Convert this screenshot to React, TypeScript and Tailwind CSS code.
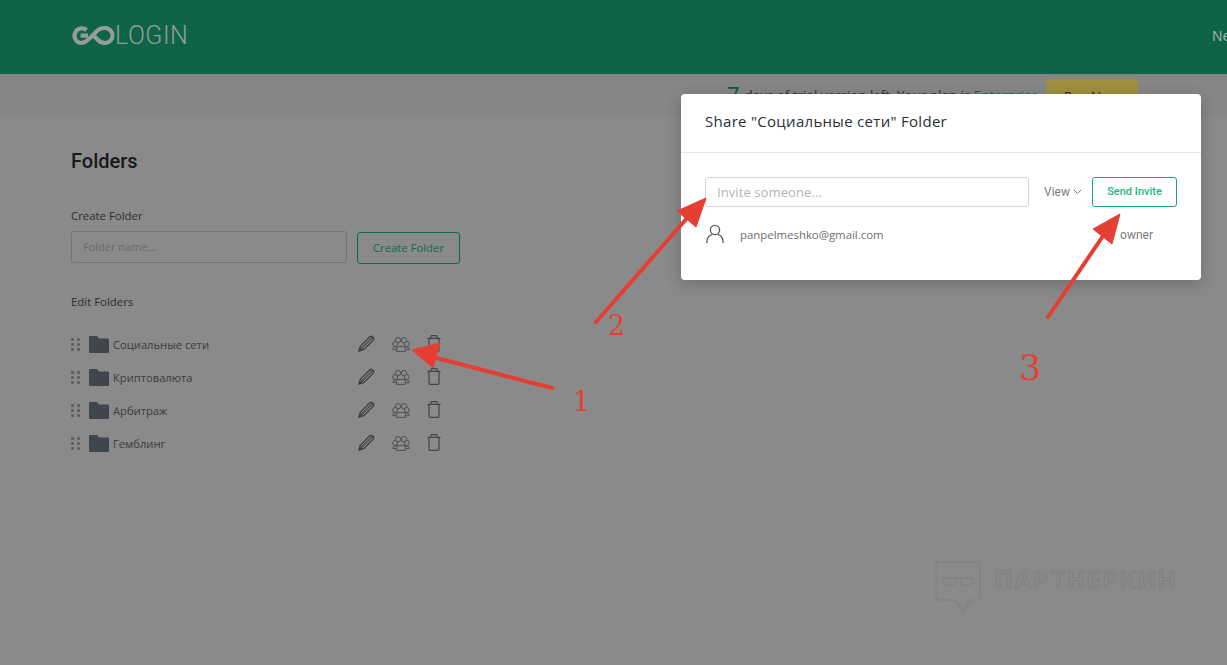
const folders = ["Социальные сети", "Криптовалюта", "Арбитраж", "Гемблинг"];

function Grip() {
  return (
    <svg width="9" height="13" viewBox="0 0 9 13" fill="#5c6064">
      {[0, 5, 10].map((y) => (
        <g key={y}>
          <rect x="0" y={y} width="3" height="3" rx="1" />
          <rect x="6" y={y} width="3" height="3" rx="1" />
        </g>
      ))}
    </svg>
  );
}

function Folder() {
  return (
    <svg width="20" height="17" viewBox="0 0 20 17" fill="#41464d">
      <path d="M0 1 Q0 0 1 0 H8 L10 2.5 H19 Q20 2.5 20 3.5 V16 Q20 17 19 17 H1 Q0 17 0 16 Z" />
    </svg>
  );
}

function PencilIcon() {
  return (
    <svg width="17" height="17" viewBox="0 0 17 17" fill="none" stroke="#3c3f42" strokeWidth="1.1" strokeLinejoin="round">
      <path d="M1 16 L2.2 11.3 L11.8 1.7 Q13 0.6 14.3 1.6 L15.4 2.7 Q16.4 4 15.3 5.2 L5.7 14.8 Z" fill="#55585a" />
      <path d="M3.4 11.6 L12.6 2.6 M5.4 13.6 L14.4 4.4" stroke="#9a9a9a" strokeWidth="0.8" />
      <path d="M1 16 L1.6 13.6 L3.4 15.4 Z" fill="#2e3032" />
    </svg>
  );
}

function UsersIcon() {
  return (
    <svg width="18" height="15" viewBox="0 0 18 15" fill="none" stroke="#4f5153" strokeWidth="1">
      <circle cx="6" cy="3.2" r="2.7" />
      <circle cx="12" cy="3.2" r="2.7" />
      <circle cx="3.2" cy="7" r="2.5" fill="#8a8a8a" />
      <circle cx="14.8" cy="7" r="2.5" fill="#8a8a8a" />
      <path d="M0.8 12.6 Q0.8 10 3.4 10 H5 M17.2 12.6 Q17.2 10 14.6 10 H13" />
      <path d="M0.8 12.6 H4.6 M17.2 12.6 H13.4" />
      <path d="M4.6 14.4 V11.6 Q4.6 9.4 7 9.4 H11 Q13.4 9.4 13.4 11.6 V14.4 Z" fill="#8a8a8a" />
    </svg>
  );
}

function TrashIcon() {
  return (
    <svg width="14" height="17" viewBox="0 0 14 17" fill="none" stroke="#424446" strokeWidth="1.2">
      <path d="M0.5 3.4 H13.5" />
      <path d="M4 3 V1.2 Q4 0.6 4.6 0.6 H9.4 Q10 0.6 10 1.2 V3" />
      <path d="M2 3.4 V15 Q2 16.4 3.4 16.4 H10.6 Q12 16.4 12 15 V3.4" />
    </svg>
  );
}

function Logo() {
  return (
    <div className="flex items-center">
      <svg width="44" height="19" viewBox="0 0 44 19" fill="none" stroke="#949d98" strokeWidth="4.2">
        <path d="M15.6 4 A7.4 7.4 0 1 0 9.5 17 Q14 17 17.5 13.4 L24 7 Q28 2 34 2 A7.4 7.4 0 1 1 34 17 Q29.5 17 26.5 13.4 L21 8" />
        <path d="M9.6 9.6 H17" />
      </svg>
      <span className="font-['Roboto',sans-serif] font-light text-[25px] leading-none tracking-[0.5px] text-[#949d98]">LOGIN</span>
    </div>
  );
}

function Annotations() {
  const red = "#e53f33";
  return (
    <svg className="absolute inset-0 pointer-events-none" width="1227" height="665" viewBox="0 0 1227 665" fill="none">
      <path d="M552 388 L425 355" stroke={red} strokeWidth="4" strokeLinecap="round" />
      <path d="M412 350 L440 343 L433 368 Z" fill={red} stroke={red} strokeLinejoin="round" />
      <path d="M596 322 L688 217" stroke={red} strokeWidth="4" strokeLinecap="round" />
      <path d="M706 198 L677 211 L696 227 Z" fill={red} stroke={red} strokeLinejoin="round" />
      <path d="M1048 317 L1103 236" stroke={red} strokeWidth="4" strokeLinecap="round" />
      <path d="M1120 214 L1093 229 L1112 244 Z" fill={red} stroke={red} strokeLinejoin="round" />
    </svg>
  );
}

function Num({ n, className }: { n: string; className: string }) {
  return <span className={"absolute font-['DejaVu_Serif',serif] text-[#e53f33] leading-none " + className}>{n}</span>;
}

function Watermark() {
  return (
    <div className="absolute left-[935px] top-[561px] flex items-start">
      <svg width="46" height="52" viewBox="0 0 46 52" fill="none" stroke="#828282" strokeWidth="1.5">
        <path d="M3 1 H43 Q45 1 45 3 V37 Q45 39 43 39 H35 L28 51 L20 39 H3 Q1 39 1 37 V3 Q1 1 3 1 Z" />
        <path d="M8 17 H38 M8 17 Q7 24 13 24 H18 Q21 24 21 17 M25 17 Q25 24 29 24 H34 Q39 24 38 17" />
      </svg>
      <span className="ml-[14px] mt-[6px] font-['Inter',sans-serif] font-bold text-[23px] leading-[26px] tracking-[2px] text-transparent [-webkit-text-stroke:1px_#808080]">ПАРТНЕРКИН</span>
    </div>
  );
}

function Modal() {
  return (
    <div className="absolute left-[681px] top-[94px] w-[520px] h-[186px] bg-white rounded-[4px] shadow-[0_4px_16px_rgba(0,0,0,0.2)] font-['Open_Sans',sans-serif]">
      <div className="h-[59px] px-6 pb-[4px] flex items-center border-b border-[#e6e6e6]">
        <h2 className="text-[15px] font-medium tracking-[0.3px] text-[#2c2f33]">Share "Социальные сети" Folder</h2>
      </div>
      <div className="px-6 pt-6">
        <div className="flex items-center">
          <div className="w-[324px] h-[30px] border border-[#d4d4d4] rounded-[3px] px-[11px] pt-[2px] flex items-center text-[13.2px] text-[#b4b4b4]">Invite someone...</div>
          <div className="ml-[15px] w-[48px] flex items-center gap-[3px] font-['Roboto',sans-serif] text-[12px] text-[#7d7d7d]">
            View
            <svg width="9" height="6" viewBox="0 0 9 6" fill="none" stroke="#7d7d7d"><path d="M0.8 0.8 L4.5 4.6 L8.2 0.8" /></svg>
          </div>
          <button className="w-[85px] h-[30px] border border-[#18a874] rounded-[3px] font-['Roboto',sans-serif] text-[11px] font-medium text-[#1fb57f]">Send Invite</button>
        </div>
        <div className="flex items-center h-[24px] mt-[15px]">
          <svg width="20" height="20" viewBox="0 0 20 20" fill="none" stroke="#5a5d60" strokeWidth="1.4">
            <circle cx="10" cy="6" r="4.6" />
            <path d="M1.8 19 Q2 11.5 7 10.6 M18.2 19 Q18 11.5 13 10.6" />
          </svg>
          <span className="ml-[15px] pt-[2px] text-[11.4px] text-[#6b6e70]">panpelmeshko@gmail.com</span>
          <span className="ml-auto mr-[24px] pt-[2px] font-['Roboto',sans-serif] text-[12px] text-[#7a7a7a]">owner</span>
        </div>
      </div>
    </div>
  );
}

export default function App() {
  return (
    <div className="relative w-[1227px] h-[665px] overflow-hidden bg-[#8a8a8a] font-['Open_Sans',sans-serif]">
      <header className="h-[74px] bg-[#0d6447] flex items-center justify-between pl-[71px] pb-[4px]">
        <Logo />
        <span className="text-[14px] text-[#a9bab2] w-[15px] overflow-hidden">Ne</span>
      </header>
      <div className="h-[42px] bg-[#868686] flex pl-[727px] pt-[5px]">
        <span className="text-[22px] leading-[30px] text-[#0d5a42]">7</span>
        <span className="ml-[5px] mt-[6px] text-[13.4px] leading-[20px] text-[#2f2f2f] whitespace-nowrap">days of trial version left. Your plan is <span className="text-[#0e6a4c]">Enterprise</span></span>
        <div className="ml-[8px] w-[92px] h-[32px] bg-[#a08f3f] rounded-[3px] text-center pt-[7px] text-[14px] text-[#332f1a]">Pay Now</div>
      </div>
      <main className="pl-[71px] pt-[32px]">
        <h1 className="font-['Roboto',sans-serif] font-medium text-[20px] leading-[26px] text-[#17191c]">Folders</h1>
        <p className="mt-[33px] text-[11.4px] leading-[18px] text-[#2c2e30]">Create Folder</p>
        <div className="mt-[6px] flex items-start gap-[10px]">
          <div className="w-[276px] h-[32px] border border-[#757575] rounded-[3px] px-[11px] flex items-center text-[11px] text-[#6a6a6a]">Folder name...</div>
          <button className="w-[103px] h-[32px] mt-[1px] border border-[#0e6a4c] rounded-[3px] text-[11.3px] text-[#0f6a4d]">Create Folder</button>
        </div>
        <p className="mt-[29px] text-[11.4px] leading-[18px] text-[#2c2e30]">Edit Folders</p>
        <ul className="mt-[17px]">
          {folders.map((f) => (
            <li key={f} className="h-[33px] flex items-center">
              <Grip />
              <span className="ml-[9px]"><Folder /></span>
              <span className="ml-[4px] w-[245px] pt-[2px] text-[11.2px] text-[#3a3c3e]">{f}</span>
              <span className="-mt-[2px]"><PencilIcon /></span>
              <span className="ml-[17px] -mt-[1px]"><UsersIcon /></span>
              <span className="ml-[17px] -mt-[2px]"><TrashIcon /></span>
            </li>
          ))}
        </ul>
      </main>
      <Watermark />
      <Modal />
      <Annotations />
      <Num n="1" className="left-[573px] top-[388px] text-[27px]" />
      <Num n="2" className="left-[608px] top-[312px] text-[27px]" />
      <Num n="3" className="left-[1019px] top-[351px] text-[35px]" />
    </div>
  );
}
